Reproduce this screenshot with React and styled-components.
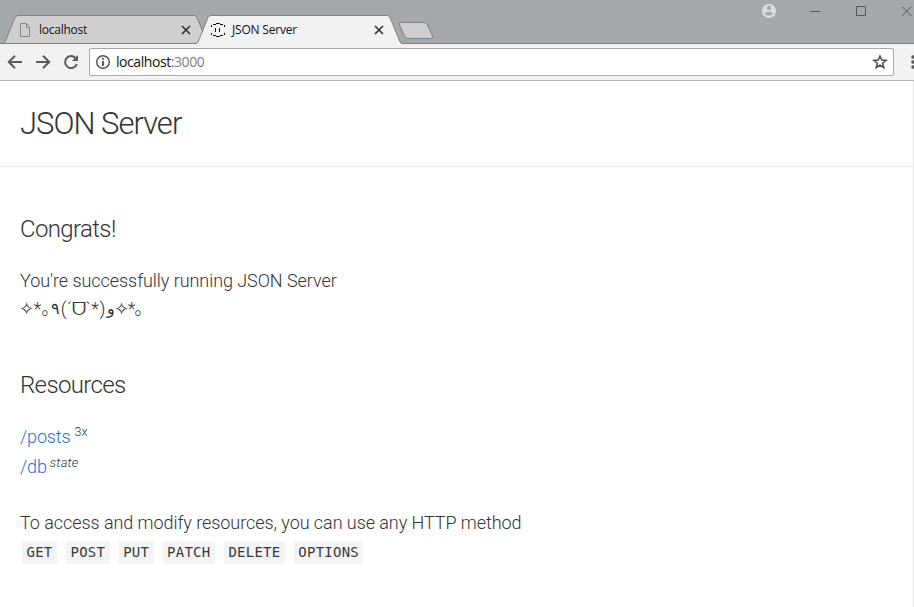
import React from 'react';
import styled, { createGlobalStyle } from 'styled-components';

const GlobalStyle = createGlobalStyle`
  * { box-sizing: border-box; }
  body { margin: 0; background: #fff; overflow: hidden; }
`;
const Browser = styled.div`
  width: 914px; height: 607px; overflow: hidden;
  display: flex; flex-direction: column; background: #fff;
`;
const TabStrip = styled.header`
  height: 44px; flex: none; display: flex; align-items: flex-end;
  position: relative; background: #a4a9ac; border-bottom: 1px solid #7d8082;
  padding-left: 3px;
`;
const Tab = styled.div`
  position: relative; z-index: ${p => (p.$active ? 2 : 1)};
  width: 206px; height: 29px; flex: none;
  margin: 0 -13px -1px 0; padding: 0 15px 0 16px;
  display: flex; align-items: center;
`;
const TabShape = styled.svg`
  position: absolute; left: 0; top: 0; width: 206px; height: 29px;
`;
const TabIcon = styled.svg`
  position: relative; width: 16px; height: 16px; flex: none; margin-left: -2px;
`;
const TabTitle = styled.span`
  position: relative; flex: 1; margin-left: 6px;
  font: 12px/16px "Open Sans", sans-serif; color: #111;
  letter-spacing: ${p => p.$spacing}px; white-space: nowrap;
`;
const CloseIcon = styled.svg`
  position: relative; width: 10px; height: 10px; flex: none; margin: 1px 3px 0 0;
`;
const NewTab = styled.svg`
  width: 36px; height: 20px; flex: none; margin: 0 0 3px 9px;
`;
const WindowControls = styled.svg`
  width: 154px; height: 22px; align-self: flex-start; margin-left: auto; flex: none;
`;
const Toolbar = styled.div`
  height: 37px; flex: none; display: flex; align-items: center;
  background: #f2f2f2; border-bottom: 1px solid #b5b5b5; padding-left: 7px;
`;
const NavIcon = styled.svg`
  width: 16px; height: 16px; flex: none; margin-right: 12px;
`;
const AddressBar = styled.div`
  width: 805px; height: 28px; flex: none; margin-left: -2px;
  border: 1px solid #a8a8a8; border-radius: 2px; background: #fff;
  display: flex; align-items: center; padding: 0 5px;
`;
const BarIcon = styled.svg`
  width: 16px; height: 16px; flex: none;
`;
const Url = styled.span`
  flex: 1; margin-left: 5px; font: 14px/20px "Open Sans", sans-serif;
  letter-spacing: -0.43px; color: #111;
`;
const Port = styled.span`color: #808080;`;
const MenuIcon = styled.svg`
  width: 5px; height: 16px; margin-left: auto; flex: none;
`;
const Page = styled.main`
  flex: 1; background: #fff; color: #333; border-right: 1px solid #e6e6e6;
  font: 300 18px/30px Roboto, sans-serif;
`;
const PageHeader = styled.div`
  height: 86px; border-bottom: 1px solid #eaecef; padding: 23px 20px 0;
`;
const Title = styled.h1`
  margin: 0; font-size: 31px; font-weight: 300; line-height: 40px; letter-spacing: -1px;
`;
const Section = styled.section`
  padding: ${p => p.$top}px 20px 0;
`;
const Heading = styled.h2`
  margin: 0 0 22px; font-size: 24px; font-weight: 300; line-height: 30px;
  letter-spacing: -0.63px;
`;
const Text = styled.p`
  margin: 0; height: 30px; line-height: 30px;
  letter-spacing: -0.06px; white-space: nowrap;
`;
const Kaomoji = styled.div`
  display: flex; height: 26px; line-height: 26px;
`;
const Glyph = styled.bdi`
  flex: none; width: ${p => p.$w}px; white-space: nowrap;
  display: flex; justify-content: center;
  font-family: ${p => (p.$alt ? '"DejaVu Sans"' : 'Roboto')}, "Noto Sans CJK JP", "DejaVu Sans", sans-serif;
  font-size: ${p => p.$size || 18}px;
`;
const Resource = styled.div`
  display: flex; height: 30px; line-height: 30px;
`;
const Link = styled.a`color: #2a70d8; letter-spacing: -0.12px;`;
const Note = styled.span`
  margin-left: ${p => (p.$italic ? 3 : 4)}px; font-size: ${p => (p.$italic ? 13 : 12.5)}px;
  line-height: ${p => (p.$italic ? 22 : 20)}px;
  font-style: ${p => (p.$italic ? 'italic' : 'normal')};
  letter-spacing: ${p => (p.$italic ? 0.2 : 0)}px;
`;
const Methods = styled.div`
  display: flex; gap: 9px; padding-left: 2px; margin-top: 3px;
`;
const Method = styled.code`
  height: 23px; padding: 0 4.5px; background: #f3f4f6; color: #3a3a3a;
  font: 400 14px/23px "DejaVu Sans Mono", monospace; letter-spacing: 0.23px;
`;

const face = [
  ['✧', 13, 1, 18], ['*', 9], ['｡', 8, 0, 18], ['٩', 10, 1, 16], ['(', 7], ['´', 5], ['ᗜ', 13, 1, 17],
  ['`', 6], ['*', 8], [')', 7], ['و', 9, 1, 16], ['✧', 12, 1, 18], ['*', 9], ['｡', 6, 0, 18],
];
const methods = ['GET', 'POST', 'PUT', 'PATCH', 'DELETE', 'OPTIONS'];

function BrowserTab({ active, title, spacing, children }) {
  return (
    <Tab $active={active}>
      <TabShape viewBox="0 0 206 29">
        <path d="M0 29 L2 27 L12 2.5 Q13 .5 15 .5 H191 Q193 .5 194 2.5 L204 27 L206 29Z" fill={active ? '#f2f2f2' : '#cfcfcf'} />
        <path d="M0 28.5 L2 27 L12 2.5 Q13 .5 15 .5 H191 Q193 .5 194 2.5 L204 27 L206 28.5" fill="none" stroke="#7d8183" />
        {!active && <path d="M0 28.5H206" stroke="#7d8183" />}
      </TabShape>
      {children}
      <TabTitle $spacing={spacing}>{title}</TabTitle>
      <CloseIcon viewBox="0 0 10 10"><path d="M1 1 9 9M9 1 1 9" stroke="#333" strokeWidth="1.7" /></CloseIcon>
    </Tab>
  );
}

export default function App() {
  return (
    <>
      <GlobalStyle />
      <Browser>
        <TabStrip>
          <BrowserTab title="localhost" spacing={-0.25}>
            <TabIcon viewBox="0 0 16 16" fill="none" stroke="#858585"><path d="M3.5 1.5H9.5L12.5 4.5V14.5H3.5ZM9.5 1.5V5.5H12.5" /></TabIcon>
          </BrowserTab>
          <BrowserTab active title="JSON Server" spacing={-0.2}>
            <TabIcon viewBox="0 0 16 16" fill="none" stroke="#111">
              <path d="M3 2.5H6M6 1.5H10M10 2.5H13M1.5 3V5M14.5 3V5M1.5 11V13M14.5 11V13M3 13.5H6M6 14.5H10M10 13.5H13M5.5 6V10M9.5 6V10" />
            </TabIcon>
          </BrowserTab>
          <NewTab viewBox="0 0 36 20"><path d="M2.5 2.5H26Q28 2.5 29 4L34.5 16Q35 18.5 33 18.5H10Q8 18.5 7 17L1.5 5Q1 2.5 2.5 2.5Z" fill="#cfcfcf" stroke="#7d8183" /></NewTab>
          <WindowControls viewBox="0 0 154 22" fill="none">
            <circle cx="9" cy="11" r="7" fill="#dcdee0" />
            <circle cx="9" cy="8" r="2.2" fill="#a4a9ac" />
            <path d="M5 14C5 11 13 11 13 14C11 16.3 7 16.3 5 14Z" fill="#a4a9ac" />
            <path d="M50 11.5H60M96.5 6.5H105.5V15.5H96.5ZM142 6.5 151.5 16M151.5 6.5 142 16" stroke="#54585a" />
          </WindowControls>
        </TabStrip>
        <Toolbar>
          <NavIcon viewBox="0 0 16 16" fill="none" stroke="#5a5a5a" strokeWidth="2"><path d="M15 8H2M8 1.8 1.8 8 8 14.2" /></NavIcon>
          <NavIcon viewBox="0 0 16 16" fill="none" stroke="#5a5a5a" strokeWidth="2"><path d="M1 8H14M8 1.8 14.2 8 8 14.2" /></NavIcon>
          <NavIcon viewBox="0 0 16 16" fill="none" stroke="#5a5a5a" strokeWidth="2"><path d="M13.8 10A6 6 0 1 1 12.5 4" /><path d="M15 1V7H9Z" fill="#5a5a5a" stroke="none" /></NavIcon>
          <AddressBar>
            <BarIcon viewBox="0 0 16 16" fill="none" stroke="#4d4d4d"><circle cx="8" cy="8" r="6.3" strokeWidth="1.4" /><path d="M8 7V12M8 4V5.7" strokeWidth="1.8" /></BarIcon>
            <Url>localhost<Port>:3000</Port></Url>
            <BarIcon viewBox="0 0 16 16" fill="none" stroke="#4d4d4d" strokeWidth="1.5"><path d="M8 2 9.7 6.1 14.1 6.4 10.7 9.2 11.8 13.6 8 11.2 4.2 13.6 5.3 9.2 1.9 6.4 6.3 6.1Z" /></BarIcon>
          </AddressBar>
          <MenuIcon viewBox="0 0 5 16" fill="#5a5a5a"><circle cx="4" cy="3" r="1.8" /><circle cx="4" cy="8" r="1.8" /><circle cx="4" cy="13" r="1.8" /></MenuIcon>
        </Toolbar>
        <Page>
          <PageHeader><Title>JSON Server</Title></PageHeader>
          <Section $top={47}>
            <Heading>Congrats!</Heading>
            <Text>You're successfully running JSON Server</Text>
            <Kaomoji>{face.map(([c, w, alt, size], i) => <Glyph key={i} $w={w} $alt={alt} $size={size}>{c}</Glyph>)}</Kaomoji>
          </Section>
          <Section $top={48}>
            <Heading>Resources</Heading>
            <Resource><Link>/posts</Link><Note>3x</Note></Resource>
            <Resource><Link>/db</Link><Note $italic>state</Note></Resource>
          </Section>
          <Section $top={26}>
            <Text>To access and modify resources, you can use any HTTP method</Text>
            <Methods>{methods.map(m => <Method key={m}>{m}</Method>)}</Methods>
          </Section>
        </Page>
      </Browser>
    </>
  );
}
